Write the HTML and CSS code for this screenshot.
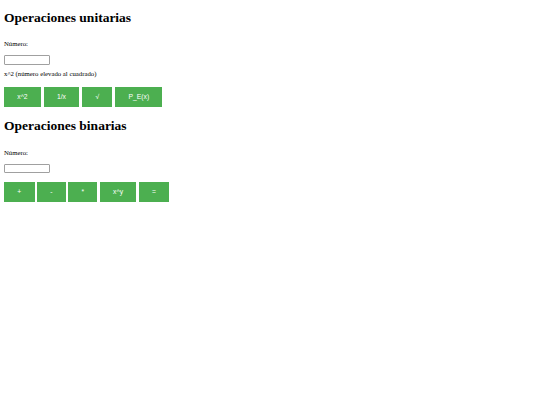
FILE: index.html
```html
<!DOCTYPE html>
<html lang="es">
<head>
<meta charset="utf-8">
<title>Calculadora</title>
<link rel="stylesheet" href="styles.css">
</head>
<body>
<section class="block">
  <h2 class="title">Operaciones unitarias</h2>
  <label class="label" for="n1">Número:</label>
  <input class="field field-a" id="n1" type="text">
  <p class="hint">x^2 (número elevado al cuadrado)</p>
  <div class="buttons">
    <button class="btn">x^2</button>
    <button class="btn">1/x</button>
    <button class="btn">√</button>
    <button class="btn">P_E(x)</button>
  </div>
</section>
<section class="block block-b">
  <h2 class="title">Operaciones binarias</h2>
  <label class="label" for="n2">Número:</label>
  <input class="field field-b" id="n2" type="text">
  <div class="buttons buttons-b">
    <button class="btn">+</button>
    <button class="btn">-</button>
    <button class="btn">*</button>
    <button class="btn">x^y</button>
    <button class="btn">=</button>
  </div>
</section>
</body>
</html>
```
FILE: styles.css
```css
html, body {
  margin: 0;
  padding: 0;
  background: #ffffff;
}
body {
  padding: 0 4px;
  font-family: "Liberation Serif", "Times New Roman", serif;
  font-size: 6.75px;
  color: #000000;
}
.block {
  display: flex;
  flex-direction: column;
  align-items: flex-start;
}
.title {
  margin: 9.5px 0 0;
  font-size: 13.5px;
  line-height: 15px;
  font-weight: bold;
}
.block-b .title {
  margin-top: 11.5px;
}
.label {
  margin-top: 15.5px;
  line-height: 8px;
}
.field {
  box-sizing: border-box;
  width: 46px;
  height: 10px;
  margin: 7px 0 0;
  padding: 0 2px;
  border: 1px solid #a0a0a0;
  border-radius: 1px;
  background: #ffffff;
  font-size: 6.75px;
}
.field-b {
  height: 8.5px;
  margin-top: 7.5px;
}
.hint {
  margin: 4.7px 0 0;
  line-height: 8px;
}
.buttons {
  display: flex;
  gap: 2.8px;
  margin-top: 9.3px;
}
.buttons-b {
  margin-top: 8.7px;
  gap: 2.4px;
}
.btn {
  height: 20px;
  padding: 0 13.3px;
  border: none;
  background: #4caf50;
  color: #ffffff;
  font-family: "Liberation Sans", Arial, sans-serif;
  font-size: 6.75px;
  line-height: 20px;
  text-align: center;
}
```
